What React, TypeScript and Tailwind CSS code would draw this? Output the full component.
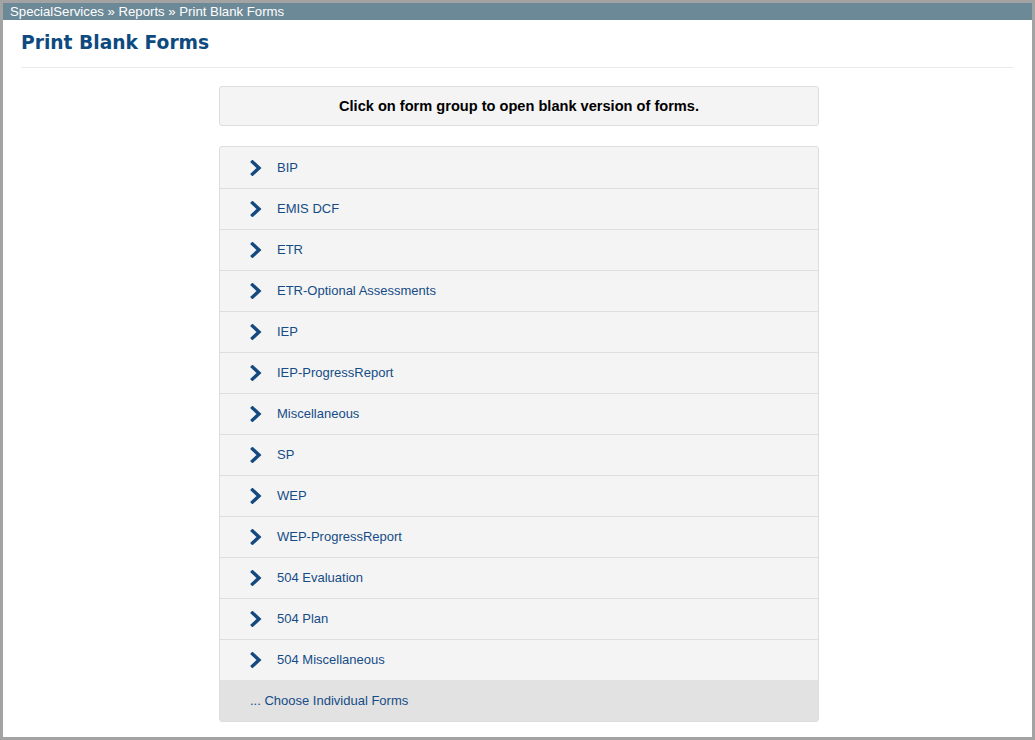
const groups = [
  'BIP',
  'EMIS DCF',
  'ETR',
  'ETR-Optional Assessments',
  'IEP',
  'IEP-ProgressReport',
  'Miscellaneous',
  'SP',
  'WEP',
  'WEP-ProgressReport',
  '504 Evaluation',
  '504 Plan',
  '504 Miscellaneous',
]

function Chevron() {
  return (
    <svg className="h-[16px] w-[12px] shrink-0" viewBox="0 0 12 16">
      <polyline
        points="2.5,2 9,8 2.5,14"
        fill="none"
        stroke="#13497f"
        strokeWidth={3.4}
        strokeLinejoin="miter"
        strokeLinecap="square"
      />
    </svg>
  )
}

export default function App() {
  return (
    <div className="h-[740px] w-[1035px] bg-[#a3a3a3] p-[3px] font-['Liberation_Sans',Arial,sans-serif]">
      <div className="flex h-full flex-col bg-white">
        <div className="flex h-[17px] items-center bg-[#6c8997] px-[7px] text-[13.2px] leading-none text-white">
          SpecialServices » Reports » Print Blank Forms
        </div>

        <div className="px-[18px]">
          <h1 className="pt-[11px] pb-[12px] font-['DejaVu_Sans',Verdana,sans-serif] text-[18.7px] font-bold leading-[24px] text-[#0d4a80]">
            Print Blank Forms
          </h1>
          <div className="h-px bg-[#eaeaea]" />
        </div>

        <div className="mt-[18px] ml-[216px] w-[600px]">
          <div className="flex h-[40px] items-center justify-center rounded-[3px] border border-[#dedede] bg-[#f4f4f4] pt-[2px] text-[14.6px] font-bold text-black">
            Click on form group to open blank version of forms.
          </div>

          <div className="mt-[20px] overflow-hidden rounded-[3px] border border-[#dedede] bg-[#f4f4f4]">
            {groups.map((g, i) => (
              <div
                key={g}
                className={`flex h-[41px] items-center gap-[15px] pl-[30px] text-[13px] text-[#154c86] ${i > 0 ? 'border-t border-[#dedede]' : ''}`}
              >
                <Chevron />
                <span>{g}</span>
              </div>
            ))}
            <div className="flex h-[41px] items-center bg-[#e2e2e2] pl-[30px] text-[13px] text-[#154c86]">
              ... Choose Individual Forms
            </div>
          </div>
        </div>
      </div>
    </div>
  )
}
